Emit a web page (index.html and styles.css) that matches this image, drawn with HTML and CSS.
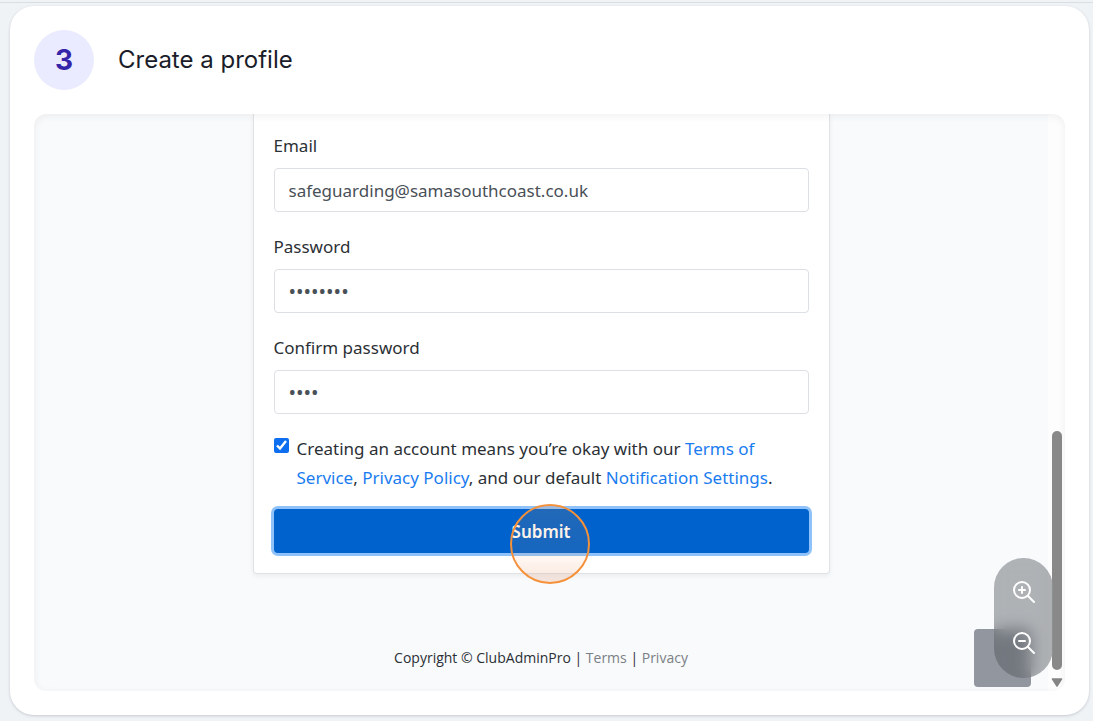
FILE: index.html
```html
<!DOCTYPE html>
<html lang="en">
<head>
  <meta charset="UTF-8">
  <meta name="viewport" content="width=device-width, initial-scale=1">
  <title>Create a profile</title>
  <link rel="stylesheet" href="styles.css">
</head>
<body>
  <main class="step-card">
    <header class="step-header">
      <span class="step-number">3</span>
      <h1>Create a profile</h1>
    </header>

    <div class="screen">
      <div class="screen-page">
        <form class="signup">
          <div class="field">
            <label for="email">Email</label>
            <input type="email" id="email" value="safeguarding@samasouthcoast.co.uk">
          </div>
          <div class="field">
            <label for="password">Password</label>
            <input type="password" id="password" value="password">
          </div>
          <div class="field">
            <label for="confirm">Confirm password</label>
            <input type="password" id="confirm" value="pass">
          </div>
          <div class="terms">
            <input type="checkbox" id="terms" checked>
            <label for="terms">Creating an account means you’re okay with our <a href="#">Terms of Service</a>, <a href="#">Privacy Policy</a>, and our default <a href="#">Notification Settings</a>.</label>
          </div>
          <div class="submit-row">
            <button type="submit" class="submit">Submit</button>
            <span class="click-marker"></span>
          </div>
        </form>
        <footer class="copyright">Copyright © ClubAdminPro | <a href="#">Terms</a> | <a href="#">Privacy</a></footer>
      </div>

      <!-- Scrollbar -->
      <div class="scrollbar">
        <div class="thumb"></div>
        <svg class="arrow" viewBox="0 0 12 9"><path d="M1.5 1h9L6 8z" fill="#858585" stroke="#858585" stroke-width="1.5" stroke-linejoin="round"/></svg>
      </div>

      <!-- Zoom controls -->
      <div class="corner-box"></div>
      <div class="zoom-controls">
        <button type="button" aria-label="Zoom in">
          <svg viewBox="0 0 24 24"><circle cx="10" cy="10" r="8"/><path d="M16 16l6 6M10 7v6M7 10h6"/></svg>
        </button>
        <button type="button" aria-label="Zoom out">
          <svg viewBox="0 0 24 24"><circle cx="10" cy="10" r="8"/><path d="M16 16l6 6M7 10h6"/></svg>
        </button>
      </div>
    </div>
  </main>
</body>
</html>
```
FILE: styles.css
```css
* {
  box-sizing: border-box;
}
html {
  margin-top: 2px;
  border-top: 1px solid #dadde2;
  background: #f0f3f6;
}
body {
  margin: 0;
  padding: 3px 4px 7px 10px;
  font-family: "Noto Sans", "Open Sans", sans-serif;
  color: #2b3035;
}
a {
  color: #1a7cf0;
  text-decoration: none;
}

/* Step card */
.step-card {
  padding: 24px;
  background: #fff;
  border-radius: 24px;
  box-shadow: 0 1px 3px rgba(30, 41, 59, 0.2);
}
.step-header {
  display: flex;
  align-items: center;
  gap: 24px;
  margin-bottom: 24px;
}
.step-number {
  width: 60px;
  height: 60px;
  border-radius: 50%;
  background: #ebebff;
  color: #3525a8;
  font: bold 28px/60px Inter, sans-serif;
  text-align: center;
}
h1 {
  margin: 0;
  font: 400 24px/32px Inter, sans-serif;
  color: #1a1d29;
}

/* Captured screen */
.screen {
  position: relative;
  display: flex;
  border-radius: 12px;
  background: #f8fafc;
  overflow: hidden;
}
.screen::after {
  content: "";
  position: absolute;
  inset: 0;
  border-radius: 12px;
  box-shadow: inset 0 2px 8px rgba(0, 0, 0, 0.06);
  pointer-events: none;
}
.screen-page {
  flex: 1;
  min-width: 0;
}

/* Signup form */
.signup {
  width: 100%;
  max-width: 577px;
  margin: 0 auto;
  padding: 17px 20px 20px;
  background: #fff;
  border: 1px solid #e0e3e6;
  border-top: 0;
  border-radius: 0 0 4px 4px;
  box-shadow: 0 2px 5px rgba(0, 0, 0, 0.06);
  font-size: 17px;
  line-height: 29px;
}
.field {
  margin-bottom: 20px;
}
.field label {
  display: block;
  margin-bottom: 8px;
}
.field input {
  display: block;
  width: 100%;
  height: 44px;
  padding: 0 14px;
  border: 1px solid #dcdfe3;
  border-radius: 4px;
  background: #fff;
  color: #495057;
  font: inherit;
}
.field input[type="password"] {
  font-size: 20px;
}
.terms {
  display: flex;
  gap: 8px;
  margin-bottom: 17px;
}
.terms input {
  flex: none;
  width: 15px;
  height: 15px;
  margin: 4px 0 0;
  accent-color: #0d6ff0;
}
.submit-row {
  position: relative;
}
.submit {
  display: block;
  width: 100%;
  height: 44px;
  border: 0;
  border-radius: 4px;
  background: #0062cc;
  box-shadow: 0 0 0 3px #90c2fa;
  color: #fff;
  font: 600 17px/44px "Noto Sans", "Open Sans", sans-serif;
  cursor: pointer;
}
.click-marker {
  position: absolute;
  top: -5px;
  left: calc(50% - 31px);
  width: 80px;
  height: 80px;
  border: 2px solid #f5913a;
  border-radius: 50%;
  background: linear-gradient(rgba(245, 145, 58, 0.14), rgba(245, 145, 58, 0.08) 70%, rgba(225, 130, 90, 0.2));
  pointer-events: none;
}

.copyright {
  margin-top: 73px;
  padding-bottom: 22px;
  font-family: "Open Sans", "Noto Sans", sans-serif;
  font-size: 14px;
  line-height: 22px;
  text-align: center;
}
.copyright a {
  color: #7b8085;
}

/* Scrollbar */
.scrollbar {
  display: flex;
  flex-direction: column;
  align-items: center;
  justify-content: flex-end;
  gap: 8px;
  width: 17px;
  padding-bottom: 4px;
  background: #fdfdfd;
}
.thumb {
  width: 10px;
  height: 239px;
  border-radius: 5px;
  background: #898989;
}
.arrow {
  width: 12px;
  height: 9px;
}

/* Zoom controls */
.corner-box {
  position: absolute;
  right: 34px;
  bottom: 4px;
  width: 57px;
  height: 58px;
  border-radius: 4px;
  background: #92979f;
}
.zoom-controls {
  position: absolute;
  right: 12px;
  bottom: 13px;
  display: flex;
  flex-direction: column;
  width: 59px;
  height: 120px;
  padding: 8px 0 10px;
  border-radius: 30px;
  background: rgba(75, 78, 84, 0.42);
  backdrop-filter: blur(8px);
}
.zoom-controls button {
  flex: 1;
  display: flex;
  align-items: center;
  justify-content: center;
  padding: 0;
  border: 0;
  background: none;
  cursor: pointer;
}
.zoom-controls svg {
  width: 24px;
  height: 24px;
  fill: none;
  stroke: #fff;
  stroke-width: 2;
  stroke-linecap: round;
}
```
